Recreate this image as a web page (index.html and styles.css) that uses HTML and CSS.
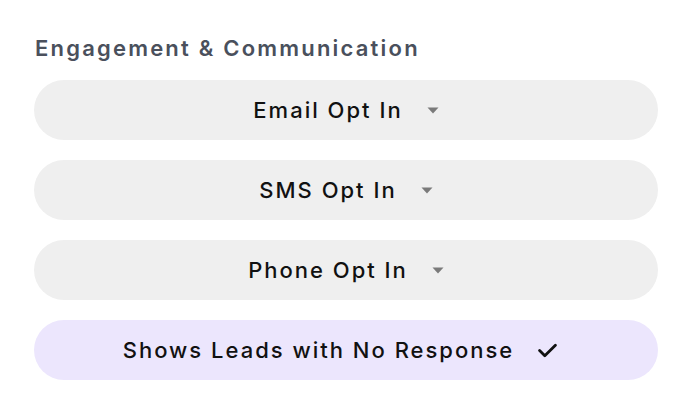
FILE: index.html
```html
<!DOCTYPE html>
<html>
<head>
<meta charset="utf-8">
<link rel="stylesheet" href="styles.css">
</head>
<body>
<section class="panel">
  <h2 class="title">Engagement &amp; Communication</h2>
  <div class="list">
    <button class="pill">
      <span class="label">Email Opt In</span>
      <svg class="caret" width="12" height="7" viewBox="0 0 12 7"><path d="M0.5 0.5 H11.5 L6 6.5 Z" fill="#7a7a7a"/></svg>
    </button>
    <button class="pill">
      <span class="label">SMS Opt In</span>
      <svg class="caret" width="12" height="7" viewBox="0 0 12 7"><path d="M0.5 0.5 H11.5 L6 6.5 Z" fill="#7a7a7a"/></svg>
    </button>
    <button class="pill">
      <span class="label">Phone Opt In</span>
      <svg class="caret" width="12" height="7" viewBox="0 0 12 7"><path d="M0.5 0.5 H11.5 L6 6.5 Z" fill="#7a7a7a"/></svg>
    </button>
    <button class="pill pill-active">
      <span class="label">Shows Leads with No Response</span>
      <svg class="check" width="19" height="15" viewBox="0 0 19 15"><path d="M1.6 7.6 L6.8 12.8 L17.4 2.2" fill="none" stroke="#111" stroke-width="2.8" stroke-linecap="round" stroke-linejoin="round"/></svg>
    </button>
  </div>
</section>
</body>
</html>
```

FILE: styles.css
```css
html, body {
  margin: 0;
  padding: 0;
  background: #ffffff;
}
.panel {
  padding: 33px 16px 0 34px;
  width: 624px;
}
.title {
  margin: 0 0 17px 1px;
  font-family: Inter, "Liberation Sans", sans-serif;
  font-weight: 600;
  font-size: 22px;
  line-height: 30px;
  letter-spacing: 2.2px;
  color: #4a505c;
}
.list {
  display: flex;
  flex-direction: column;
  gap: 20px;
}
.pill {
  display: flex;
  align-items: center;
  justify-content: center;
  gap: 24px;
  height: 60px;
  width: 100%;
  border: none;
  border-radius: 30px;
  background: #efefef;
  padding: 0;
  cursor: pointer;
}
.pill-active {
  background: #ece6fd;
}
.label {
  font-family: Inter, "Open Sans", "Liberation Sans", sans-serif;
  font-weight: 500;
  font-size: 22px;
  letter-spacing: 2px;
  color: #111111;
}
.caret {
  display: block;
}
.check {
  display: block;
  margin-right: 12px;
}
```
